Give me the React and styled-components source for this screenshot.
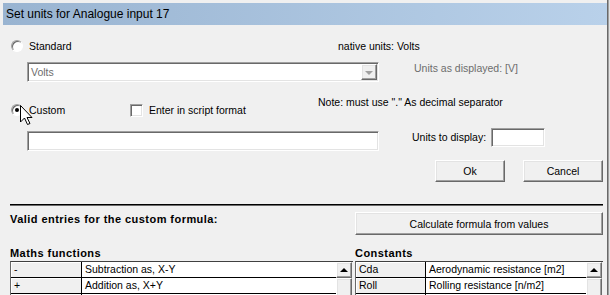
import React from "react";
import styled, { createGlobalStyle, css } from "styled-components";

const GlobalStyle = createGlobalStyle`
  html, body { margin:0; padding:0; background:#f0f0f0; }
  body { font-family:"Liberation Sans", Arial, sans-serif; font-size:10.5px; color:#000; }
`;

// classic 3d borders
const sunken = css`
  box-sizing:border-box;
  border:1px solid;
  border-color:#a0a0a0 #fff #fff #a0a0a0;
  box-shadow:inset 1px 1px 0 #696969, inset -1px -1px 0 #e3e3e3;
  background:#fff;
`;
const raised = css`
  box-sizing:border-box;
  border:1px solid;
  border-color:#fff #696969 #696969 #fff;
  box-shadow:inset -1px -1px 0 #a0a0a0, inset 1px 1px 0 #e3e3e3;
  background:#f0f0f0;
`;

const Frame = styled.div`
  position:relative;
  width:610px;
  height:295px;
  box-sizing:border-box;
  overflow:hidden;
  padding:3px 3px 0 3px;
  background:#f0f0f0;
  box-shadow:inset -1px 0 0 #e3e3e3, inset -2px 0 0 #a0a0a0, inset -3px 0 0 #696969;
  display:flex;
  flex-direction:column;
`;
const TitleBar = styled.div`
  flex:none;
  height:22px;
  display:flex;
  align-items:center;
  padding-left:3px;
  background:linear-gradient(to right, #99b4d1, #b9d1ea);
  font-size:12px;
`;
const Body = styled.div`
  display:flex;
  flex-direction:column;
  padding:0 4px 0 7px;
`;
const Row = styled.div`
  display:flex;
  align-items:${p => p.$align || "center"};
  margin-top:${p => p.$top}px;
  height:${p => (p.$h ? p.$h + "px" : "auto")};
  justify-content:${p => p.$justify || "flex-start"};
  gap:${p => p.$gap || 0}px;
`;
const Block = styled.div`
  display:flex;
  align-items:center;
  flex:none;
  width:${p => p.$w}px;
  margin-top:${p => p.$top || 0}px;
  height:${p => (p.$h ? p.$h + "px" : "auto")};
`;
const Option = styled.label`
  display:flex;
  align-items:center;
  gap:6px;
  margin-left:1px;
  width:${p => (p.$w ? p.$w + "px" : "auto")};
`;
const Radio = styled.span`
  position:relative;
  flex:none;
  width:12px;
  height:12px;
  box-sizing:border-box;
  border-radius:50%;
  border:1px solid;
  border-color:#a0a0a0 #fff #fff #a0a0a0;
  box-shadow:inset 1px 1px 0 #696969;
  background:#fff;
  &::after{
    content:"";
    display:${p => (p.$checked ? "block" : "none")};
    position:absolute;
    left:3px; top:3px;
    width:4px; height:4px;
    border-radius:50%;
    background:#000;
  }
`;
const Check = styled.span`
  ${sunken};
  flex:none;
  width:13px;
  height:13px;
`;
const Text = styled.span`
  white-space:nowrap;
  line-height:${p => p.$lh || 14}px;
  color:${p => (p.$disabled ? "#6d6d6d" : "#000")};
  margin-left:${p => p.$left || 0}px;
`;
const Combo = styled.div`
  ${sunken};
  display:flex;
  align-items:center;
  justify-content:space-between;
  margin-left:17px;
  width:352px;
  height:20px;
  padding:0 1px 0 3px;
  color:#6d6d6d;
`;
const DropButton = styled.span`
  ${raised};
  width:16px;
  height:16px;
  display:flex;
  align-items:center;
  justify-content:center;
  &::after{
    content:"";
    margin-top:2px;
    border-left:4px solid transparent;
    border-right:4px solid transparent;
    border-top:4px solid #a0a0a0;
  }
`;
const Field = styled.div`
  ${sunken};
  flex:none;
  width:${p => p.$w}px;
  height:${p => p.$h}px;
  margin-left:${p => p.$left || 0}px;
  margin-top:${p => p.$top || 0}px;
`;
const Button = styled.button`
  ${raised};
  width:${p => (p.$w ? p.$w + "px" : "100%")};
  height:${p => p.$h}px;
  font-family:inherit;
  font-size:10.5px;
  color:#000;
  padding:0;
`;
const Separator = styled.div`
  margin-top:22px;
  height:1px;
  background:#000;
  border-bottom:1px solid #6b6b6b;
`;
const Columns = styled.div`
  display:grid;
  grid-template-columns:343px 248px;
  column-gap:2px;
  margin-top:${p => p.$top}px;
  align-items:start;
`;
const Heading = styled.div`
  font-weight:bold;
  font-size:11px;
  letter-spacing:0.45px;
  line-height:14px;
  white-space:nowrap;
`;
const GridWrap = styled.div`
  display:flex;
  margin-top:1px;
  border-top:1px solid #404040;
  border-left:1px solid #696969;
`;
const Table = styled.div`
  flex:1;
  display:flex;
  flex-direction:column;
`;
const GridRow = styled.div`
  display:flex;
  height:15px;
  border-bottom:1px solid #000;
`;
const FixedCell = styled.div`
  flex:none;
  width:${p => p.$w}px;
  background:#f0f0f0;
  border-right:1px solid #000;
  box-shadow:inset 1px 1px 0 #fff;
  padding-left:3px;
  line-height:15px;
  white-space:nowrap;
`;
const Cell = styled.div`
  flex:1;
  background:#fff;
  padding-left:3px;
  line-height:15px;
  white-space:nowrap;
  overflow:hidden;
`;
const ScrollBar = styled.div`
  flex:none;
  width:16px;
  display:flex;
  flex-direction:column;
  background:#f0f0f0;
  margin-right:${p => p.$right || 0}px;
`;
const UpArrow = styled.div`
  ${raised};
  height:16px;
  display:flex;
  align-items:center;
  justify-content:center;
  &::after{
    content:"";
    border-left:4px solid transparent;
    border-right:4px solid transparent;
    border-bottom:4px solid #000;
  }
`;
const Thumb = styled.div`
  ${raised};
  height:30px;
`;
const Cursor = styled.svg`
  position:absolute;
  left:20px;
  top:105px;
`;

// the third row starts right at the bottom edge, only its lines show
const maths = [
  ["-", "Subtraction as, X-Y"],
  ["+", "Addition as, X+Y"],
  ["", ""],
];
const constants = [
  ["Cda", "Aerodynamic resistance [m2]"],
  ["Roll", "Rolling resistance [n/m2]"],
  ["", ""],
];

const Grid = ({ rows, first, right }) => (
  <GridWrap>
    <Table>
      {rows.map(([a, b], i) => (
        <GridRow key={i}>
          <FixedCell $w={first}>{a}</FixedCell>
          <Cell>{b}</Cell>
        </GridRow>
      ))}
    </Table>
    <ScrollBar $right={right}>
      <UpArrow />
      <Thumb />
    </ScrollBar>
  </GridWrap>
);

export default function App() {
  return (
    <>
      <GlobalStyle />
      <Frame>
        <TitleBar>Set units for Analogue input 17</TitleBar>
        <Body>
          <Row $top={13} $h={15}>
            <Block $w={328}>
              <Option>
                <Radio />
                <Text>Standard</Text>
              </Option>
            </Block>
            <Text>native units: Volts</Text>
          </Row>
          <Row $top={9} $align="flex-start">
            <Combo>
              <span>Volts</span>
              <DropButton />
            </Combo>
            <Text $disabled $left={35} $lh={12}>Units as displayed: [V]</Text>
          </Row>
          <Row $top={13} $align="flex-start">
            <Block $w={308} $top={8} $h={14}>
              <Option $w={118}>
                <Radio $checked />
                <Text>Custom</Text>
              </Option>
              <Option>
                <Check />
                <Text>Enter in script format</Text>
              </Option>
            </Block>
            <Text $lh={15}>Note: must use "." As decimal separator</Text>
          </Row>
          <Row $top={11} $align="flex-start">
            <Field $w={352} $h={20} $left={17} $top={3} />
            <Text $left={33} $lh={19}>Units to display:</Text>
            <Field $w={54} $h={19} $left={5} />
          </Row>
          <Row $top={9} $justify="flex-end" $gap={18}>
            <Button $w={70} $h={22}>Ok</Button>
            <Button $w={80} $h={22}>Cancel</Button>
          </Row>
          <Separator />
          <Columns $top={6}>
            <Heading>Valid entries for the custom formula:</Heading>
            <Button $h={23}>Calculate formula from values</Button>
          </Columns>
          <Columns $top={11}>
            <div>
              <Heading>Maths functions</Heading>
              <Grid rows={maths} first={67} right={1} />
            </div>
            <div>
              <Heading>Constants</Heading>
              <Grid rows={constants} first={66} right={1} />
            </div>
          </Columns>
        </Body>
        <Cursor width="14" height="22" viewBox="0 0 14 22">
          <polygon
            points="0.5,0.5 0.5,17 4.5,13 7.5,19.5 10,18.5 7,12.5 12,12.5"
            fill="#fff"
            stroke="#000"
            strokeWidth="1"
          />
        </Cursor>
      </Frame>
    </>
  );
}
